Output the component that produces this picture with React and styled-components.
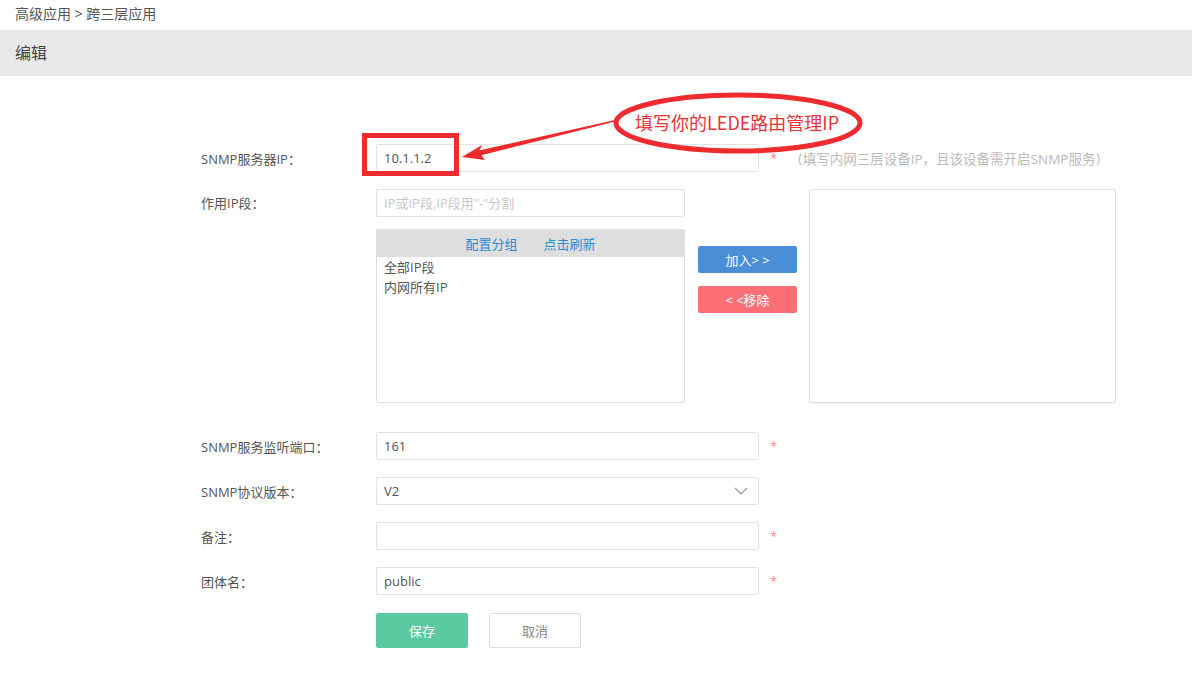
import React from "react";
import styled, { createGlobalStyle } from "styled-components";

const GlobalStyle = createGlobalStyle`
	html, body {
		margin: 0;
		padding: 0;
		background: #fff;
	}
	body {
		font-family: "Open Sans", "Noto Sans CJK SC", sans-serif;
		color: #555;
		font-size: 13px;
	}
	* {
		box-sizing: border-box;
	}
`;

export default function App() {
	return (
		<Page>
			<GlobalStyle />
			<Breadcrumb>高级应用 &gt; 跨三层应用</Breadcrumb>
			<Header>编辑</Header>
			<Form>
				<Row>
					<Label>SNMP服务器IP：</Label>
					<Input defaultValue="10.1.1.2" />
					<Star>*</Star>
					<Hint>（填写内网三层设备IP，且该设备需开启SNMP服务）</Hint>
				</Row>
				<RangeRow>
					<Label>作用IP段：</Label>
					<MiddleCol>
						<Input $width={309} placeholder='IP或IP段,IP段用"-"分割' />
						<ListBox>
							<ListHead>
								<Link>配置分组</Link>
								<Link>点击刷新</Link>
							</ListHead>
							<ListItem>全部IP段</ListItem>
							<ListItem>内网所有IP</ListItem>
						</ListBox>
					</MiddleCol>
					<MoveCol>
						<MoveButton $color="#4a8ed8">加入&gt; &gt;</MoveButton>
						<MoveButton $color="#fb6f75">&lt; &lt;移除</MoveButton>
					</MoveCol>
					<TargetBox />
				</RangeRow>
				<Row>
					<Label>SNMP服务监听端口：</Label>
					<Input defaultValue="161" />
					<Star>*</Star>
				</Row>
				<Row>
					<Label>SNMP协议版本：</Label>
					<SelectBox>
						<span>V2</span>
						<svg width="14" height="8" viewBox="0 0 14 8">
							<path d="M1 1 L7 7 L13 1" fill="none" stroke="#999" strokeWidth="1.2" />
						</svg>
					</SelectBox>
				</Row>
				<Row>
					<Label>备注：</Label>
					<Input />
					<Star>*</Star>
				</Row>
				<Row>
					<Label>团体名：</Label>
					<Input defaultValue="public" />
					<Star>*</Star>
				</Row>
				<Actions>
					<SaveButton>保存</SaveButton>
					<CancelButton>取消</CancelButton>
				</Actions>
			</Form>

			<Overlay width="1192" height="684" viewBox="0 0 1192 684">
				<rect x="364.5" y="135.5" width="92" height="38" fill="none" stroke="#ee2b2f" strokeWidth="5" />
				<ellipse cx="738" cy="123" rx="122" ry="28" fill="none" stroke="#ee2b2f" strokeWidth="5" />
				<path d="M614 121 L478 151.5 L479 155 Z" fill="#ee2b2f" stroke="#ee2b2f" strokeWidth="1.5" strokeLinejoin="round" />
				<path d="M462 157 L482 145 L479 152 L485 160 Z" fill="#ee2b2f" />
			</Overlay>
			<Callout>填写你的LEDE路由管理IP</Callout>
		</Page>
	);
}

const Page = styled.div`
	position: relative;
	width: 1192px;
	height: 684px;
	overflow: hidden;
`;

const Breadcrumb = styled.div`
	height: 30px;
	line-height: 27px;
	padding-left: 15px;
	font-size: 14px;
	color: #555;
`;

const Header = styled.div`
	height: 46px;
	line-height: 46px;
	padding-left: 15px;
	background: #e9e9e9;
	font-size: 16px;
	color: #444;
`;

const Form = styled.div`
	padding: 68px 0 0 201px;
	display: flex;
	flex-direction: column;
	gap: 17px;
`;

const Row = styled.div`
	display: flex;
	align-items: center;
	height: 28px;
`;

const Label = styled.div`
	width: 175px;
	flex-shrink: 0;
	font-size: 13px;
	color: #555;
`;

const Input = styled.input`
	width: ${(p) => p.$width || 383}px;
	height: 28px;
	border: 1px solid #e3e3e3;
	border-radius: 2px;
	padding: 0 7px;
	font-family: "Open Sans", "Noto Sans CJK SC", sans-serif;
	font-size: 13px;
	color: #555;
	outline: none;
	&::placeholder {
		color: #c8c8c8;
	}
`;

const Star = styled.span`
	margin-left: 11px;
	color: #f08a8a;
	font-size: 13px;
`;

const Hint = styled.span`
	margin-left: 12px;
	color: #bbb;
	font-size: 13.5px;
`;

const RangeRow = styled.div`
	display: flex;
	align-items: flex-start;
	margin-bottom: 12px;
	& > ${Label} {
		line-height: 28px;
	}
`;

const MiddleCol = styled.div`
	display: flex;
	flex-direction: column;
	gap: 12px;
	width: 309px;
`;

const ListBox = styled.div`
	height: 174px;
	border: 1px solid #dedede;
	border-radius: 2px;
`;

const ListHead = styled.div`
	height: 27px;
	background: #dedede;
	display: flex;
	justify-content: center;
	align-items: center;
	gap: 26px;
`;

const Link = styled.span`
	color: #2c8bd1;
	font-size: 13px;
	cursor: pointer;
`;

const ListItem = styled.div`
	padding-left: 7px;
	line-height: 20px;
	font-size: 13px;
	color: #555;
`;

const MoveCol = styled.div`
	display: flex;
	flex-direction: column;
	gap: 13px;
	margin: 57px 0 0 13px;
`;

const MoveButton = styled.button`
	width: 99px;
	height: 27px;
	border: none;
	border-radius: 2px;
	background: ${(p) => p.$color};
	color: #fff;
	font-family: "Open Sans", "Noto Sans CJK SC", sans-serif;
	font-size: 13px;
`;

const TargetBox = styled.div`
	width: 307px;
	height: 214px;
	margin-left: 12px;
	border: 1px solid #e0e0e0;
	border-radius: 2px;
	box-shadow: 0 1px 1px rgba(0, 0, 0, 0.04);
`;

const SelectBox = styled.div`
	width: 383px;
	height: 28px;
	border: 1px solid #e3e3e3;
	border-radius: 2px;
	padding: 0 10px 0 7px;
	display: flex;
	align-items: center;
	justify-content: space-between;
	font-size: 13px;
	color: #555;
`;

const Actions = styled.div`
	display: flex;
	gap: 21px;
	padding-left: 175px;
	margin-top: 1px;
`;

const SaveButton = styled.button`
	width: 92px;
	height: 35px;
	border: none;
	border-radius: 2px;
	background: #5bcaa0;
	color: #fff;
	font-family: "Open Sans", "Noto Sans CJK SC", sans-serif;
	font-size: 13px;
`;

const CancelButton = styled(SaveButton)`
	background: #fff;
	border: 1px solid #ddd;
	color: #888;
`;

const Overlay = styled.svg`
	position: absolute;
	left: 0;
	top: 0;
	pointer-events: none;
`;

const Callout = styled.div`
	position: absolute;
	left: 635px;
	top: 109px;
	font-family: "Noto Sans CJK SC", sans-serif;
	font-size: 18px;
	line-height: 26px;
	color: #e8333a;
	white-space: nowrap;
`;
